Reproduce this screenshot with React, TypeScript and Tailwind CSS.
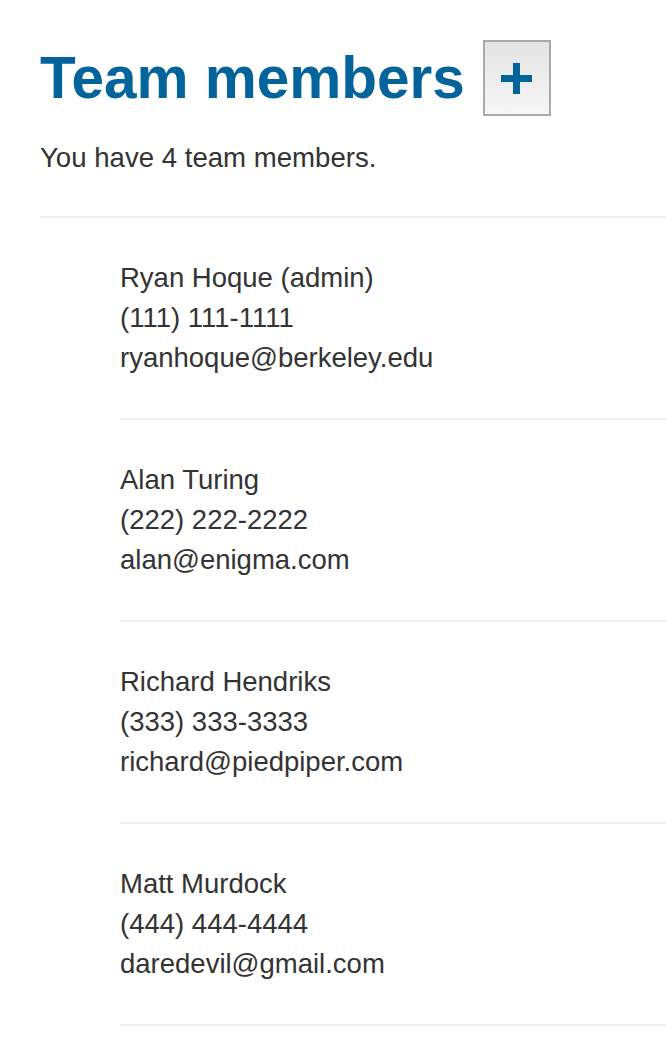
const members = [
  { name: "Ryan Hoque (admin)", phone: "(111) 111-1111", email: "ryanhoque@berkeley.edu" },
  { name: "Alan Turing", phone: "(222) 222-2222", email: "alan@enigma.com" },
  { name: "Richard Hendriks", phone: "(333) 333-3333", email: "richard@piedpiper.com" },
  { name: "Matt Murdock", phone: "(444) 444-4444", email: "daredevil@gmail.com" },
];

export default function App() {
  return (
    <div className="min-h-[1050px] bg-white pl-[40px] pt-[40px] font-['Liberation_Sans',Arial,sans-serif] text-[#333333]">
      <div className="flex items-center gap-[18px]">
        <h1 className="text-[58.5px] font-bold leading-none text-[#03649b]">Team members</h1>
        {/* add member button */}
        <button className="flex h-[76px] w-[68px] items-center justify-center border-2 border-[#aaaaaa] bg-gradient-to-b from-[#e4e4e4] to-[#f6f6f6]">
          <svg width="31" height="31" viewBox="0 0 31 31">
            <rect x="12" y="0" width="7" height="31" fill="#03649b" />
            <rect x="0" y="12" width="31" height="7" fill="#03649b" />
          </svg>
        </button>
      </div>

      <p className="mt-[22px] text-[27.6px] leading-[40px]">You have {members.length} team members.</p>

      <div className="mt-[38px] border-t-2 border-[#eeeeee]">
        <ul className="ml-[80px]">
          {members.map((m, i) => (
            <li key={i} className="border-b-2 border-[#eeeeee] py-[40px] text-[27.5px] leading-[40px]">
              <div>{m.name}</div>
              <div>{m.phone}</div>
              <div>{m.email}</div>
            </li>
          ))}
        </ul>
      </div>
    </div>
  );
}
